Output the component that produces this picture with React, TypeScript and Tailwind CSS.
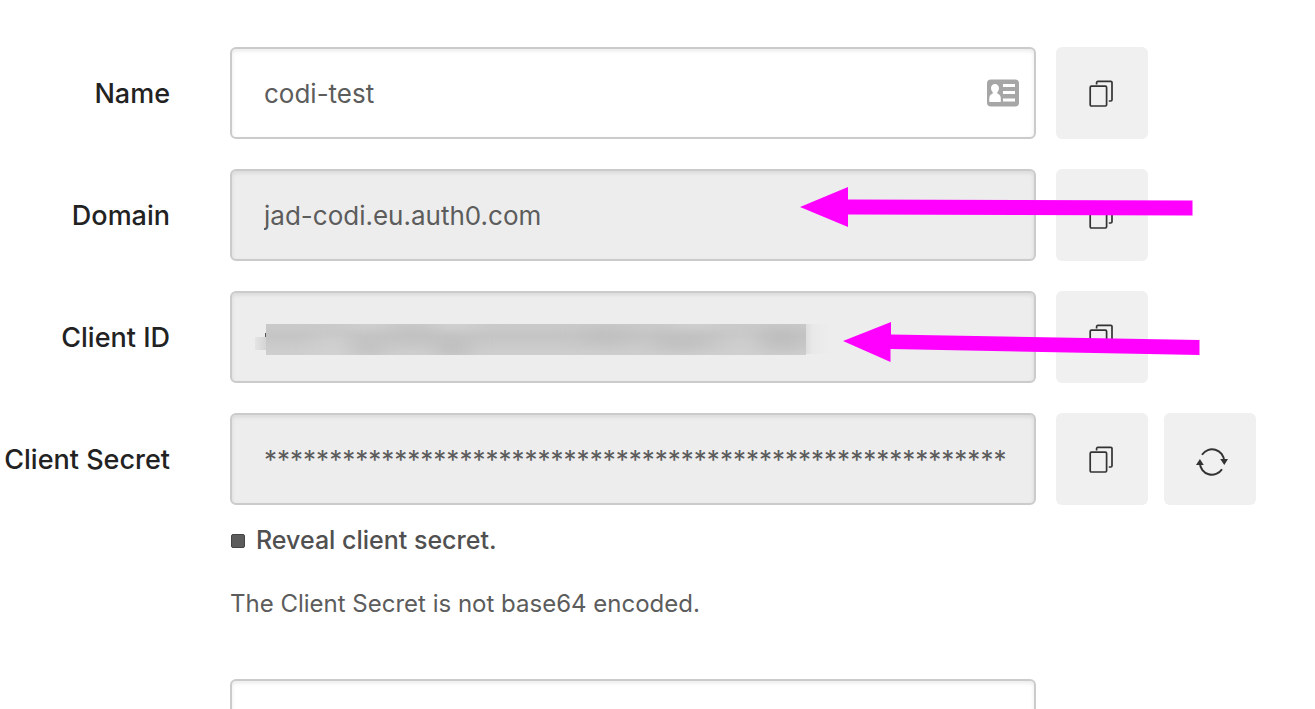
import React from "react";

const ARROW = "#ff00ff";
const SECRET = "*".repeat(57);

function CopyIcon() {
  return (
    <svg aria-hidden="true" width="26" height="30" viewBox="0 -2 26 30" fill="none" stroke="#333" strokeWidth="1.7">
      <rect x="1.2" y="6.2" width="16.4" height="19.8" rx="1.2" />
      <path d="M7.6 4.6V2.6a1.2 1.2 0 0 1 1.2-1.2h13a1.2 1.2 0 0 1 1.2 1.2v17.2a1.2 1.2 0 0 1-1.2 1.2h-2" />
    </svg>
  );
}

function RotateIcon() {
  return (
    <svg aria-hidden="true" width="36" height="34" viewBox="-4 -6 36 34" fill="none" stroke="#333" strokeWidth="2">
      <path d="M6 6.800A12 12 0 0 1 28.100 13" />
      <path d="M26 21.200A12 12 0 0 1 3.900 15" />
      <path d="M24.200 11h7.800l-3.700 6zM0 17h7.800L3.900 11z" fill="#333" stroke="none" />
    </svg>
  );
}

function CardIcon() {
  return (
    <svg
      aria-hidden="true"
      className="pointer-events-none absolute top-8 right-4"
      width="33"
      height="28"
      viewBox="0 0 33 28"
    >
      <rect x="0" y="0.5" width="32" height="27" rx="4" fill="#a6a6a6" />
      <path
        d="M8 5c2.300 0 4 1.700 4 4 0 1.800-.8 3.200-1.600 4.200-.4.900 0 1.500.9 1.900 1.700.8 2.500 2.300 2.500 4.500V23H2.300v-3.400c0-2.200.8-3.700 2.500-4.500.9-.4 1.300-1 .9-1.900C4.900 12.200 4 10.800 4 9c0-2.300 1.700-4 4-4z"
        fill="#fff"
      />
      <path d="M16 5h12v3H16zM16 12h12v3H16zM16 19.500h12v3H16z" fill="#fff" />
    </svg>
  );
}

function Smudge() {
  return (
    <svg
      aria-hidden="true"
      className="pointer-events-none absolute top-8 left-6"
      width="580"
      height="32"
      viewBox="0 0 580 32"
    >
      <defs>
        <linearGradient id="tailLeft">
          <stop offset="0" stopColor="#e4e4e4" />
          <stop offset="1" stopColor="#d4d4d4" />
        </linearGradient>
        <linearGradient id="tailRight">
          <stop offset="0" stopColor="#dedede" />
          <stop offset="0.3" stopColor="#e9e9e9" />
          <stop offset="1" stopColor="#ededed" />
        </linearGradient>
        <linearGradient id="base" x2="0" y2="1">
          <stop offset="0" stopColor="#cacaca" />
          <stop offset="0.4" stopColor="#c5c5c5" />
          <stop offset="1" stopColor="#cfcfcf" />
        </linearGradient>
        <clipPath id="band">
          <rect x="12" y="1" width="540" height="31" />
        </clipPath>
        <filter id="soft" x="-20%" y="-60%" width="140%" height="220%">
          <feGaussianBlur stdDeviation="11 6" />
        </filter>
      </defs>
      <rect x="1" y="14" width="11" height="13" fill="url(#tailLeft)" />
      <rect x="11" y="10" width="1" height="4" fill="#555" />
      <rect x="552" y="1" width="24" height="30" fill="url(#tailRight)" />
      <g clipPath="url(#band)">
        <rect x="12" y="1" width="540" height="31" fill="url(#base)" />
        <g filter="url(#soft)" opacity="0.6">
          <rect x="60" y="12" width="36" height="26" fill="#d4d4d4" />
          <rect x="96" y="12" width="34" height="22" fill="#bdbdbd" />
          <rect x="96" y="-6" width="34" height="12" fill="#d6d6d6" />
          <rect x="140" y="4" width="40" height="16" fill="#bfbfbf" />
          <rect x="184" y="14" width="30" height="22" fill="#b8b8b8" />
          <rect x="182" y="-8" width="40" height="14" fill="#d8d8d8" />
          <rect x="330" y="4" width="44" height="18" fill="#bdbdbd" />
          <rect x="402" y="10" width="50" height="18" fill="#bcbcbc" />
          <rect x="420" y="-8" width="40" height="12" fill="#d8d8d8" />
          <rect x="475" y="8" width="24" height="30" fill="#d2d2d2" />
          <rect x="510" y="4" width="36" height="24" fill="#bababa" />
        </g>
      </g>
    </svg>
  );
}

function DomainArrow() {
  return (
    <svg
      aria-hidden="true"
      className="pointer-events-none absolute top-4 right-[63px]"
      width="395"
      height="44"
      viewBox="0 0 395 44"
    >
      <path d="M2 22L50 2V14.500L394.500 15.500V30.500L50 29.500V42Z" fill={ARROW} />
    </svg>
  );
}

function ClientIdArrow() {
  return (
    <svg
      aria-hidden="true"
      className="pointer-events-none absolute top-7 right-14"
      width="358"
      height="46"
      viewBox="0 0 358 46"
    >
      <path d="M1 22L49 3V15.500L357.500 21V36L48.500 30V43Z" fill={ARROW} />
    </svg>
  );
}

const fieldClass =
  "h-[92px] w-full rounded-md border-2 border-[#cbcbcb] pr-6 pl-8 text-[26px] text-[#5c5c5c] shadow-[inset_0_2px_4px_rgba(0,0,0,0.09)] outline-none";
const buttonClass = "flex size-[92px] items-center justify-center rounded-md bg-[#f0f0f0]";

type RowProps = {
  id: string;
  label: string;
  value: string;
  readOnly?: boolean;
  fieldExtra?: React.ReactNode;
  actions?: React.ReactNode;
  overlay?: React.ReactNode;
};

function Row({ id, label, value, readOnly, fieldExtra, actions, overlay }: RowProps) {
  return (
    <div className="relative flex items-center">
      <label
        htmlFor={id}
        className="w-[170px] shrink-0 pt-0.5 text-right text-[27px] leading-10 font-medium whitespace-nowrap text-[#222]"
      >
        {label}
      </label>
      <div className="relative ml-[60px] min-w-0 flex-1">
        <input
          id={id}
          type="text"
          defaultValue={value}
          readOnly={readOnly}
          className={fieldClass + (readOnly ? " bg-[#ededed]" : " bg-white")}
        />
        {fieldExtra}
      </div>
      <div className="ml-5 flex w-[200px] shrink-0 gap-4">
        <button type="button" aria-label={"Copy " + label} className={buttonClass}>
          <CopyIcon />
        </button>
        {actions}
      </div>
      {overlay}
    </div>
  );
}

export default function App() {
  return (
    <main className="h-screen overflow-hidden bg-white pt-[47px] pr-[59px] font-['Inter',sans-serif]">
      <form className="flex flex-col gap-[30px]">
        <Row id="name" label="Name" value="codi-test" fieldExtra={<CardIcon />} />
        <Row id="domain" label="Domain" value="jad-codi.eu.auth0.com" readOnly overlay={<DomainArrow />} />
        <Row id="client-id" label="Client ID" value="" readOnly fieldExtra={<Smudge />} overlay={<ClientIdArrow />} />
        <div>
          <Row
            id="client-secret"
            label="Client Secret"
            value={SECRET}
            readOnly
            actions={
              <button type="button" aria-label="Rotate secret" className={buttonClass}>
                <RotateIcon />
              </button>
            }
          />
          <div className="mr-[220px] ml-[230px]">
            <label className="mt-4 flex h-10 items-center gap-[11px] text-[25px] font-medium text-[#505050]">
              <input
                type="checkbox"
                className="ml-px size-3.5 appearance-none rounded-xs border border-[#444] bg-[#5c5c5c]"
              />
              Reveal client secret.
            </label>
            <p className="mt-[23px] text-[24px] leading-10 text-[#5c5c5c]">The Client Secret is not base64 encoded.</p>
            <textarea
              aria-label="Description"
              className="mt-[55px] block h-[180px] w-full resize-none rounded-md border-2 border-[#cbcbcb] px-8 py-7 text-[26px] shadow-[inset_0_2px_4px_rgba(0,0,0,0.09)] outline-none"
            />
          </div>
        </div>
      </form>
    </main>
  );
}
